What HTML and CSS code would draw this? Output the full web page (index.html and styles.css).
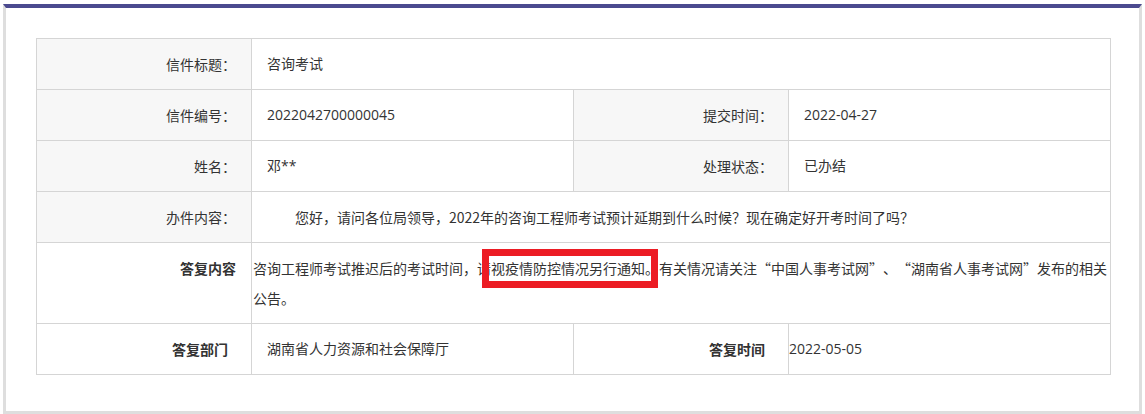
FILE: index.html
```html
<!DOCTYPE html>
<html lang="zh-CN">
<head>
<meta charset="utf-8">
<title>信件详情</title>
<link rel="stylesheet" href="styles.css">
</head>
<body>
<div class="panel">
  <table class="letter">
    <colgroup>
      <col class="c-label"><col class="c-value"><col class="c-label"><col class="c-value">
    </colgroup>
    <tbody>
      <tr>
        <td class="label">信件标题：</td>
        <td class="value" colspan="3">咨询考试</td>
      </tr>
      <tr>
        <td class="label">信件编号：</td>
        <td class="value">2022042700000045</td>
        <td class="label">提交时间：</td>
        <td class="value">2022-04-27</td>
      </tr>
      <tr>
        <td class="label">姓名：</td>
        <td class="value">邓**</td>
        <td class="label">处理状态：</td>
        <td class="value">已办结</td>
      </tr>
      <tr>
        <td class="label">办件内容：</td>
        <td class="value content" colspan="3">您好，请问各位局领导，2022年的咨询工程师考试预计延期到什么时候？现在确定好开考时间了吗？</td>
      </tr>
      <tr class="reply-row">
        <td class="label strong reply-label">答复内容</td>
        <td class="answer" colspan="3">咨询工程师考试推迟后的考试时间，请<span class="mark">视疫情防控情况另行通知。</span>有关情况请关注“中国人事考试网”、“湖南省人事考试网”发布的相关公告。</td>
      </tr>
      <tr>
        <td class="label strong plain">答复部门</td>
        <td class="value">湖南省人力资源和社会保障厅</td>
        <td class="label strong plain">答复时间</td>
        <td class="value flush">2022-05-05</td>
      </tr>
    </tbody>
  </table>
</div>
</body>
</html>
```

FILE: styles.css
```css
html, body {
  margin: 0;
  padding: 0;
  background: #ffffff;
}

body {
  font-family: "Open Sans", "Noto Sans CJK SC", sans-serif;
  font-size: 14px;
  color: #333333;
  text-spacing-trim: space-all;
}

.panel {
  box-sizing: border-box;
  width: 1139px;
  margin: 4px 0 0 3px;
  border: 3px solid #dedede;
  border-top: 4px solid #4b4a8f;
  padding: 30px 29px 36px 30px;
}

.letter {
  width: 1074px;
  table-layout: fixed;
  border-collapse: collapse;
}

.c-label { width: 215px; }
.c-value { width: 322px; }

.letter td {
  border: 1px solid #d5d5d5;
  height: 50px;
  padding: 0;
  vertical-align: middle;
  line-height: 20px;
}

.label {
  background: #f7f7f7;
  text-align: right;
  padding-right: 15px !important;
  color: #333333;
  font-family: "Noto Sans CJK SC", sans-serif;
}

.label.strong {
  font-weight: 700;
  background: #ffffff;
}

.label.plain {
  padding-right: 23px !important;
}

.value {
  padding-left: 15px !important;
}

.value.flush {
  padding-left: 0 !important;
}

.content {
  text-indent: 2em;
  font-family: "Noto Sans CJK SC", sans-serif;
}

.reply-row td {
  height: 80px;
}

.letter .reply-row td.reply-label {
  vertical-align: top;
  height: 70px;
  padding-top: 10px;
  line-height: 30px;
}

.answer {
  font-family: "Noto Sans CJK SC", sans-serif;
  line-height: 30px !important;
  padding-left: 1px !important;
}

.mark {
  position: relative;
  display: inline-block;
  height: 30px;
}

.mark::after {
  content: "";
  position: absolute;
  left: -9px;
  top: -4px;
  width: 176px;
  height: 39px;
  box-sizing: border-box;
  border: 7px solid #ec1c24;
}
```
